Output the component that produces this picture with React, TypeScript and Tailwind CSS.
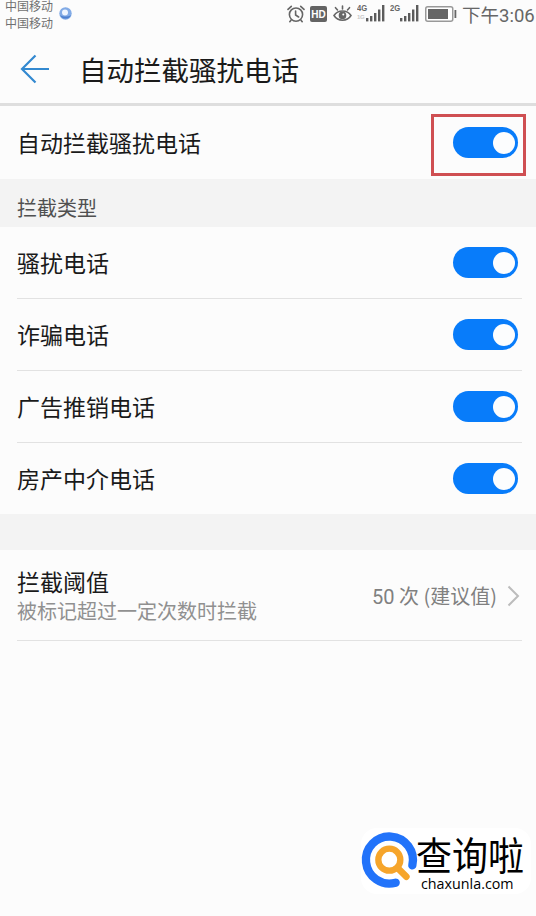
import React from 'react';

function Toggle() {
  return (
    <div className="flex h-[31px] w-[65px] shrink-0 items-center justify-end rounded-full bg-[#087cfa] pr-[3px]">
      <div className="h-[22px] w-[22px] rounded-full bg-[#fcfdfe]" />
    </div>
  );
}

function SignalBars() {
  return (
    <svg width="19" height="17" viewBox="0 0 19 17" fill="#5c5c5c">
      <rect x="0" y="13" width="2.4" height="3.4" />
      <rect x="4" y="11" width="2.4" height="5.4" />
      <rect x="8" y="8" width="2.4" height="8.4" />
      <rect x="12" y="4.5" width="2.4" height="11.9" />
      <rect x="16" y="0" width="2.4" height="16.4" />
    </svg>
  );
}

function StatusBar() {
  return (
    <div className="flex h-9 items-start justify-between text-[#666]">
      <div className="flex">
        <div className="-mt-[3px] w-[51px] pl-[5px] text-[12px] leading-[17px] whitespace-nowrap text-[#707070]">
          <div>中国移动</div>
          <div>中国移动</div>
        </div>
        <svg className="mt-[7px] ml-[8px]" width="14" height="14" viewBox="0 0 14 14">
          <circle cx="6.5" cy="6.5" r="6.2" fill="#82abe6" />
          <path d="M1 8a6 6 0 0 0 11 0c-3 2-8 2-11 0Z" fill="#4d80cf" />
          <circle cx="6" cy="5.6" r="3" fill="#eef5ff" />
        </svg>
      </div>
      <div className="flex pr-[2px]">
        <svg className="mt-[5px]" width="18" height="18" viewBox="0 0 18 18" fill="none" stroke="#666" strokeWidth="1.6" strokeLinecap="round">
          <circle cx="9" cy="9.6" r="6.6" />
          <path d="M8.6 6v4l3 2M1 4.4 4.3 1.3M17 4.4l-3.3-3.1M4 15.2l-1.2 1.5M14 15.2l1.2 1.5" />
        </svg>
        <div className="mt-[6px] ml-[5px] flex h-4 w-[17px] items-center justify-center rounded-[2px] bg-[#646464] font-['Liberation_Sans'] text-[10px] font-bold text-white">HD</div>
        <svg className="mt-[5px] ml-[6px]" width="19" height="17" viewBox="0 0 19 17" fill="none" stroke="#666" strokeWidth="1.6" strokeLinecap="round">
          <path d="M1 10.5C5 4.5 14 4.5 18 10.5 14 16.8 5 16.8 1 10.5ZM9.5 4V1M4.5 5 2.5 2.7M14.5 5l2-2.3" />
          <circle cx="9.5" cy="10.4" r="3" fill="#666" />
          <circle cx="10.3" cy="9.6" r="1" fill="#fff" stroke="none" />
        </svg>
        <div className="ml-[5px] flex w-[28px]">
          <div className="w-[9px] pt-[4px]">
            <div className="origin-left scale-x-[.85] font-['Liberation_Sans'] text-[9px] leading-[9px] font-bold">4G</div>
            <div className="font-['Liberation_Sans'] text-[6px] leading-[9px] font-bold tracking-tighter text-[#c8c8c8]">1G</div>
          </div>
          <div className="mt-[5px]"><SignalBars /></div>
        </div>
        <div className="ml-[5px] flex w-[29px]">
          <div className="w-[10px] pt-[4px]">
            <div className="origin-left scale-x-[.85] font-['Liberation_Sans'] text-[9px] leading-[9px] font-bold">2G</div>
          </div>
          <div className="mt-[5px]"><SignalBars /></div>
        </div>
        <svg className="mt-[6px] ml-[6px]" width="32" height="16" viewBox="0 0 32 16">
          <rect x=".75" y=".75" width="27" height="14.5" rx="2" fill="#fff" stroke="#999" strokeWidth="1.5" />
          <rect x="3" y="3" width="20" height="10" fill="#666" />
          <rect x="29.5" y="4" width="1.8" height="8" fill="#666" />
        </svg>
        <div className="ml-[5px] w-[72px] text-[18.5px] leading-[28px] whitespace-nowrap"><span>下午</span><span className="font-[Roboto]">3:06</span></div>
      </div>
    </div>
  );
}

const types = ['骚扰电话', '诈骗电话', '广告推销电话', '房产中介电话'];

function Logo() {
  return (
    <div className="flex h-[66px] w-[170px] rounded-2xl bg-white">
      <svg width="55" height="66" viewBox="34 26 165 198" className="shrink-0 overflow-visible" fill="none" strokeLinecap="round">
        <path d="M188 138A70.5 70.5 0 1 0 138 190" stroke="#2273fa" strokeWidth="25" />
        <circle cx="119" cy="121" r="33" stroke="#f6a52b" strokeWidth="19" />
        <path d="M145 147L170 172" stroke="#f6a52b" strokeWidth="20" />
      </svg>
      <div className="flex flex-col text-black">
        <div className="mt-[4px] origin-top scale-y-[1.08] text-[36px] leading-[38px] whitespace-nowrap">查询啦</div>
        <div className="mt-[6px] pl-[5px] font-['Open_Sans'] text-[14.3px] leading-[16px]">chaxunla.com</div>
      </div>
    </div>
  );
}

export default function App() {
  return (
    <div className="flex h-[916px] w-[536px] flex-col overflow-hidden bg-[#fcfcfc] font-['Noto_Sans_CJK_SC',sans-serif] text-[#1a1a1a]">
      <StatusBar />
      <header className="flex h-[70px] items-center border-b-[3px] border-[#dedede] pb-[2px] pl-5">
        <svg width="30" height="30" viewBox="0 0 30 30" fill="none" stroke="#3389d0" strokeWidth="2.2">
          <path d="M15.5 1.5 2 15l13.5 13.5M2 15h27" />
        </svg>
        <h1 className="ml-[29px] text-[27.5px] leading-9">自动拦截骚扰电话</h1>
      </header>
      <div className="flex h-[73px] items-center justify-between pr-[10px] pl-[17px]">
        <span className="text-[23px]">自动拦截骚扰电话</span>
        <div className="mt-[5px] flex h-[62px] w-[95px] items-center justify-end border-[3px] border-[#cf4f52] pr-[5px] pb-[5px]">
          <Toggle />
        </div>
      </div>
      <div className="flex h-12 items-center bg-[#f3f3f3] pt-[10px] pl-[17px] text-[20px] text-[#505050]">拦截类型</div>
      <div className="flex flex-col pr-[14px] pl-[17px]">
        {types.map((t, i) => (
          <div key={t} className={`flex h-[72px] items-center justify-between border-b pr-[4px] text-[23px] ${i < 3 ? 'border-[#e2e2e2]' : 'border-transparent'}`}>
            <span>{t}</span>
            <Toggle />
          </div>
        ))}
      </div>
      <div className="-mt-px h-9 bg-[#f3f3f3]" />
      <div className="mr-[14px] ml-[17px] flex h-[91px] items-center justify-between border-b border-[#e2e2e2]">
        <div className="pt-[2px]">
          <div className="text-[23px] leading-[30px]">拦截阈值</div>
          <div className="text-[20px] leading-[30px] text-[#909090]">被标记超过一定次数时拦截</div>
        </div>
        <div className="flex items-center pt-[2px] text-[20px] text-[#808080]">
          <span><span className="font-[Roboto]">50</span> 次 (建议值)</span>
          <svg className="mr-[2px] ml-[10px]" width="13" height="22" viewBox="0 0 13 22" fill="none" stroke="#bcbcbc" strokeWidth="2">
            <path d="m1.5 1.5 9.5 9.5-9.5 9.5" />
          </svg>
        </div>
      </div>
      <div className="mt-auto mb-[22px] ml-[361px]"><Logo /></div>
    </div>
  );
}
